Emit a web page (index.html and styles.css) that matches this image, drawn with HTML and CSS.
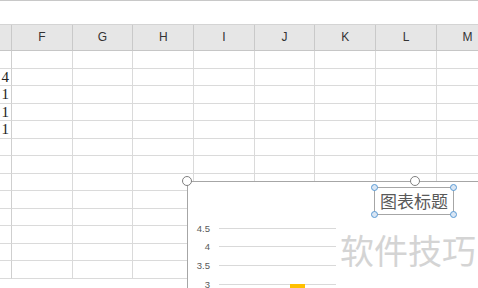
FILE: index.html
```html
<!DOCTYPE html>
<html lang="zh-CN">
<head>
    <meta charset="UTF-8">
    <title>图表</title>
    <link rel="stylesheet" href="styles.css">
</head>
<body>
    <div class="app">
        <div class="formula-bar"></div>
        <div class="sheet">
            <div class="row head">
                <div class="c e"></div>
                <div class="c">F</div>
                <div class="c">G</div>
                <div class="c">H</div>
                <div class="c">I</div>
                <div class="c">J</div>
                <div class="c">K</div>
                <div class="c">L</div>
                <div class="c">M</div>
            </div>
            <div class="row"><div class="c e"></div><div class="c"></div><div class="c"></div><div class="c"></div><div class="c"></div><div class="c"></div><div class="c"></div><div class="c"></div><div class="c"></div></div>
            <div class="row"><div class="c e">4</div><div class="c"></div><div class="c"></div><div class="c"></div><div class="c"></div><div class="c"></div><div class="c"></div><div class="c"></div><div class="c"></div></div>
            <div class="row"><div class="c e">1</div><div class="c"></div><div class="c"></div><div class="c"></div><div class="c"></div><div class="c"></div><div class="c"></div><div class="c"></div><div class="c"></div></div>
            <div class="row"><div class="c e">1</div><div class="c"></div><div class="c"></div><div class="c"></div><div class="c"></div><div class="c"></div><div class="c"></div><div class="c"></div><div class="c"></div></div>
            <div class="row"><div class="c e">1</div><div class="c"></div><div class="c"></div><div class="c"></div><div class="c"></div><div class="c"></div><div class="c"></div><div class="c"></div><div class="c"></div></div>
            <div class="row"><div class="c e"></div><div class="c"></div><div class="c"></div><div class="c"></div><div class="c"></div><div class="c"></div><div class="c"></div><div class="c"></div><div class="c"></div></div>
            <div class="row"><div class="c e"></div><div class="c"></div><div class="c"></div><div class="c"></div><div class="c"></div><div class="c"></div><div class="c"></div><div class="c"></div><div class="c"></div></div>
            <div class="row"><div class="c e"></div><div class="c"></div><div class="c"></div><div class="c"></div><div class="c"></div><div class="c"></div><div class="c"></div><div class="c"></div><div class="c"></div></div>
            <div class="row"><div class="c e"></div><div class="c"></div><div class="c"></div><div class="c"></div><div class="c"></div><div class="c"></div><div class="c"></div><div class="c"></div><div class="c"></div></div>
            <div class="row"><div class="c e"></div><div class="c"></div><div class="c"></div><div class="c"></div><div class="c"></div><div class="c"></div><div class="c"></div><div class="c"></div><div class="c"></div></div>
            <div class="row"><div class="c e"></div><div class="c"></div><div class="c"></div><div class="c"></div><div class="c"></div><div class="c"></div><div class="c"></div><div class="c"></div><div class="c"></div></div>
            <div class="row"><div class="c e"></div><div class="c"></div><div class="c"></div><div class="c"></div><div class="c"></div><div class="c"></div><div class="c"></div><div class="c"></div><div class="c"></div></div>
            <div class="row"><div class="c e"></div><div class="c"></div><div class="c"></div><div class="c"></div><div class="c"></div><div class="c"></div><div class="c"></div><div class="c"></div><div class="c"></div></div>
        </div>

        <div class="chart">
            <div class="plot">
                <div class="tick"><span>4.5</span><i></i></div>
                <div class="tick"><span>4</span><i></i></div>
                <div class="tick"><span>3.5</span><i></i></div>
                <div class="tick"><span>3</span><i></i></div>
            </div>
            <div class="bar"></div>
            <div class="title">
                图表标题
                <span class="dot tl"></span>
                <span class="dot tr"></span>
                <span class="dot bl"></span>
                <span class="dot br"></span>
            </div>
        </div>
        <span class="handle h-corner"></span>
        <span class="handle h-mid"></span>

        <div class="watermark">软件技巧</div>
    </div>
</body>
</html>
```

FILE: styles.css
```css
html, body {
    margin: 0;
    padding: 0;
    background: #fff;
}

.app {
    position: relative;
    width: 478px;
    height: 288px;
    overflow: hidden;
    font-family: "Noto Sans CJK SC", "Noto Sans", sans-serif;
}

.formula-bar {
    height: 23px;
    border-top: 1px solid #c8c8c8;
    border-bottom: 1px solid #d4d4d4;
    background: #fff;
}

.sheet {
    width: 499px;
}

.row {
    display: grid;
    grid-template-columns: 12px repeat(7, 60.7px) 1fr;
    height: 17.5px;
}

.row .c {
    box-sizing: border-box;
    border-right: 1px solid #dadada;
    border-bottom: 1px solid #dadada;
    font-family: "Liberation Serif", serif;
    font-size: 15px;
    line-height: 16px;
    color: #222;
    overflow: hidden;
}

.row .e {
    text-align: right;
    padding-right: 2px;
    border-right-color: #cfcfcf;
}

.row.head {
    height: 26px;
    background: #e6e6e6;
}

.row.head .c {
    border-right-color: #c9c9c9;
    border-bottom-color: #c6c6c6;
    font-family: "Liberation Sans", sans-serif;
    font-size: 12px;
    line-height: 25px;
    text-align: center;
    color: #333;
}

/* floating chart */
.chart {
    position: absolute;
    left: 187px;
    top: 181px;
    width: 456px;
    height: 200px;
    box-sizing: border-box;
    border: 1px solid #a6a6a6;
    background: #fff;
}

.plot {
    padding-top: 37px;
}

.tick {
    display: flex;
    align-items: center;
    height: 18.6px;
}

.tick span {
    width: 22px;
    text-align: right;
    font-family: "Liberation Sans", sans-serif;
    font-size: 9.5px;
    line-height: 11px;
    color: #595959;
}

.tick i {
    margin-left: 9px;
    width: 117px;
    height: 1px;
    background: #d9d9d9;
}

.bar {
    position: absolute;
    left: 102px;
    top: 102px;
    width: 15px;
    height: 60px;
    background: #ffc000;
}

.title {
    position: absolute;
    left: 186px;
    top: 5px;
    width: 80px;
    height: 28px;
    box-sizing: border-box;
    border: 1px solid #a6a6a6;
    font-size: 17px;
    line-height: 25px;
    text-align: center;
    color: #595959;
}

.dot {
    position: absolute;
    width: 5px;
    height: 5px;
    border: 1px solid #5b9bd5;
    border-radius: 50%;
    background: #dae6f4;
}

.dot.tl { left: -4px; top: -4px; }
.dot.tr { right: -4px; top: -4px; }
.dot.bl { left: -4px; bottom: -4px; }
.dot.br { right: -4px; bottom: -4px; }

.handle {
    position: absolute;
    width: 8px;
    height: 8px;
    border: 1.5px solid #7f7f7f;
    border-radius: 50%;
    background: #fff;
}

.h-corner { left: 182px; top: 176px; }
.h-mid { left: 410px; top: 176px; }

.watermark {
    position: absolute;
    left: 336px;
    top: 228px;
    padding-left: 4px;
    background: #fff;
    font-size: 34px;
    line-height: 44px;
    color: #d4d4d4;
}
```
